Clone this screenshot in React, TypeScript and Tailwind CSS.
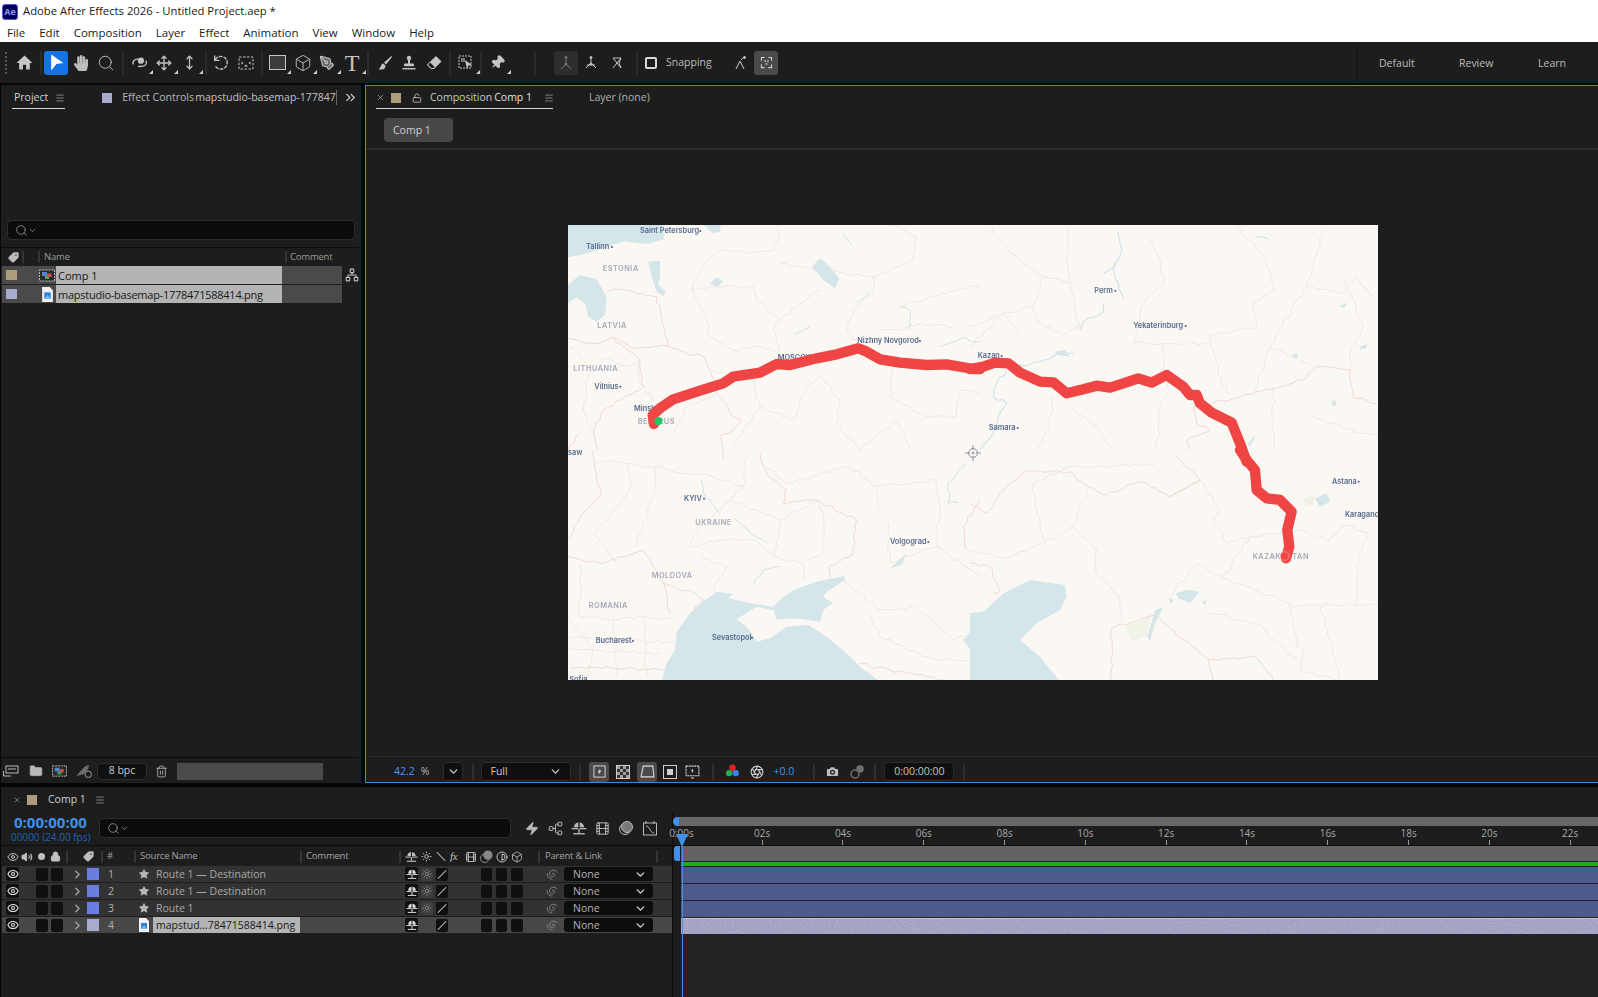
import { Box, Contrast, Film, Search, Sun, ChevronDown, ChevronRight, Camera, Trash2, Folder, Aperture, Star, Zap, Network, Move, MoveVertical, Pin, ChevronsRight, Menu, LockOpen, Lock, Eye, Volume2, Tag, X, PenTool } from "lucide-react";
import { FaHandPaper } from "react-icons/fa";
import type { ReactNode } from "react";

const menus = ["File", "Edit", "Composition", "Layer", "Effect", "Animation", "View", "Window", "Help"];
const seconds = ["0:00s", "02s", "04s", "06s", "08s", "10s", "12s", "14s", "16s", "18s", "20s", "22s", "24s"];
const layers = [
  { n: 1, name: "Route 1 — Destination", color: "bg-[#6a7ee0]", shape: true },
  { n: 2, name: "Route 1 — Destination", color: "bg-[#6a7ee0]", shape: true },
  { n: 3, name: "Route 1", color: "bg-[#6a7ee0]", shape: true },
  { n: 4, name: "mapstud…78471588414.png", color: "bg-[#a9abcd]", shape: false },
];

// small corner tick for tools with flyouts
function Tick() {
  return <span className="absolute right-[-2px] bottom-[1px] w-0 h-0 border-l-[4px] border-l-transparent border-b-[4px] border-b-[#cfcfcf]" />;
}

function Tool({ children, tick, className = "" }: { children: ReactNode; tick?: boolean; className?: string }) {
  return (
    <div className={`relative w-6 h-6 flex items-center justify-center shrink-0 text-[#c4c4c4] ${className}`}>
      {children}
      {tick && <Tick />}
    </div>
  );
}

function Sep({ className = "" }: { className?: string }) {
  return <div className={`w-[2px] h-[24px] bg-[#2b2b2b] shrink-0 ${className}`} />;
}

function ColSep({ className = "" }: { className?: string }) {
  return <div className={`w-[2px] h-[12px] bg-[#353535] shrink-0 ${className}`} />;
}

function Burger({ className = "" }: { className?: string }) {
  return <Menu size={10} strokeWidth={1.4} className={`text-[#c8c8c8] shrink-0 ${className}`} />;
}

function CompIcon({ className = "" }: { className?: string }) {
  return (
    <svg viewBox="0 0 16 12" className={className}>
      <rect x="0.5" y="0.5" width="15" height="11" fill="#2b2b2b" stroke="#b9b9b9" strokeDasharray="2 1" />
      <rect x="3" y="2.5" width="5" height="4" fill="#4f86d9" />
      <rect x="8" y="4" width="4.5" height="3.5" fill="#d34848" />
      <rect x="6" y="6.5" width="4" height="3" fill="#4aa85a" />
    </svg>
  );
}

function PngIcon({ className = "" }: { className?: string }) {
  return (
    <svg viewBox="0 0 10 14" className={className}>
      <path d="M0 0H7L10 3V14H0Z" fill="#f2f2f2" />
      <rect x="2" y="5" width="6" height="6" fill="#2f7fd6" />
      <path d="M2 11L5 7.5L8 11Z" fill="#7cc0f0" />
    </svg>
  );
}

function ShyIcon({ className = "" }: { className?: string }) {
  return (
    <svg viewBox="0 0 14 13" className={className} fill="currentColor">
      <path d="M2.5 5.5A4.5 4.5 0 0 1 11.5 5.5Z" />
      <rect x="0.5" y="6" width="13" height="1.2" />
      <rect x="6.4" y="0.5" width="1.2" height="10" fill="#1d1d1d" />
      <rect x="6.4" y="7" width="1.2" height="3.5" />
      <rect x="2" y="10.5" width="10" height="1.2" />
    </svg>
  );
}

function Spiral() {
  return (
    <svg viewBox="0 0 14 14" className="w-3 h-3 text-[#8d8d8d]" fill="none" stroke="currentColor" strokeWidth="1">
      <path d="M7.5 7.5C6.5 6.5 8.8 5.2 9.8 6.8C11 9 8.2 11 5.8 9.8C3.2 8.2 3.8 3.8 7.2 2.8C9.5 2.2 12 3 13 5" />
      <path d="M1.5 6C1 9.5 3.5 13 7.5 12.8" />
    </svg>
  );
}

function AxisIcon({ spread }: { spread?: boolean }) {
  return (
    <svg viewBox="0 0 16 16" className="w-4 h-4" fill="none" stroke="currentColor" strokeWidth="1">
      <path d={spread ? "M8 2V8M8 8L3 13M8 8L13 13M4 10H12" : "M8 2V9M8 9L3 14M8 9L13 14"} />
      <circle cx="8" cy="2.5" r="1" fill="currentColor" />
      <circle cx="8" cy="9" r="1" fill="currentColor" />
    </svg>
  );
}

// jagged boundary line from a few anchor points, seeded so it stays the same each render
function rough(pts: number[][], seed = 1) {
  let s = seed * 97;
  const rnd = () => {
    s = (s * 16807 + 11) % 2147483647;
    return (s % 1000) / 1000 - 0.5;
  };
  let d = `M${pts[0][0]},${pts[0][1]}`;
  for (let i = 1; i < pts.length; i++) {
    const [ax, ay] = pts[i - 1];
    const [bx, by] = pts[i];
    const steps = Math.max(2, Math.round(Math.hypot(bx - ax, by - ay) / 16));
    for (let k = 1; k <= steps; k++) {
      const t = k / steps;
      const j = k === steps ? 0 : 10;
      d += ` L${(ax + (bx - ax) * t + rnd() * j).toFixed(1)},${(ay + (by - ay) * t + rnd() * j).toFixed(1)}`;
    }
  }
  return d;
}

function poly(pts: number[][]) {
  return "M" + pts.map((p) => p.join(",")).join(" L") + "Z";
}

function Lines({ list, color, width = 2.4 }: { list: number[][][]; color: string; width?: number }) {
  return (
    <>
      {list.map((pts, i) => (
        <path key={i} d={rough(pts, i + pts.length + 3)} fill="none" stroke={color} strokeWidth={width} strokeLinejoin="round" />
      ))}
    </>
  );
}

function Label({ x, y, t, dot, size = 22, big }: { x: number; y: number; t: string; dot?: number[]; size?: number; big?: boolean }) {
  return (
    <>
      <text x={x} y={y} fontSize={big ? 22 : size} fontWeight={600} letterSpacing={big ? 1.6 : 0} fill={big ? "#a3a8ba" : "#566a90"} fontFamily="Inter, sans-serif">
        {t}
      </text>
      {dot && <circle cx={dot[0]} cy={dot[1]} r="3" fill="#4a5d82" />}
    </>
  );
}

const water = "#d4e6ea";
const river = "#cde3e9";
const land = "#fbf8f3";
const grey = "#e8e5de";
const pink = "#edcfce";

const routeA = [[282, 612], [278, 585], [300, 565], [340, 538], [420, 512], [490, 490], [520, 470], [600, 458], [650, 432], [690, 435], [770, 415], [830, 403], [895, 385], [920, 395], [960, 418], [1020, 428], [1100, 435], [1160, 433], [1240, 447], [1260, 447]];
const routeB = [[0, 447], [40, 440], [75, 428], [115, 430], [150, 458], [210, 485], [250, 487], [290, 520], [340, 508], [380, 497], [420, 503], [460, 490], [505, 475], [545, 488], [590, 465], [640, 500], [660, 525], [680, 525], [690, 550], [725, 578], [785, 608], [810, 670], [830, 725]];
const routeD = [[810, 0], [830, 30], [855, 60], [860, 120], [890, 145], [930, 150], [965, 185], [952, 240], [958, 290], [948, 325]];

function MapView() {
  const routeProps = { fill: "none", stroke: "#f04545", strokeWidth: 31, strokeLinejoin: "round" as const, strokeLinecap: "round" as const };
  return (
    <svg viewBox="0 0 810 455" className="w-[810px] h-[455px] block blur-[0.4px]" style={{ background: land }}>
      {/* north west */}
      <g transform="translate(-8 -5) scale(0.3333)">
        <path d={poly([[24, 15], [310, 15], [312, 58], [260, 72], [190, 64], [130, 85], [75, 102], [24, 112]])} fill={water} />
        <path d={poly([[24, 250], [50, 232], [75, 250], [85, 290], [110, 305], [135, 285], [140, 230], [110, 178], [60, 165], [24, 195]])} fill={water} />
        <path d={poly([[265, 125], [300, 122], [300, 170], [295, 195], [318, 215], [310, 228], [290, 215], [275, 170]])} fill={water} />
        <path d={poly([[430, 15], [482, 15], [480, 35], [460, 40]])} fill={water} />
        <path d={poly([[450, 190], [470, 172], [490, 185], [470, 200]])} fill={water} />
        <path d={poly([[755, 140], [780, 115], [800, 130], [838, 175], [825, 205], [790, 180]])} fill={water} />
        <path d={poly([[24, 130], [60, 118], [72, 140], [40, 155], [24, 150]])} fill={land} />
        <Lines color={river} width={3} list={[[[850, 40], [875, 75]], [[1020, 260], [1050, 270], [1045, 330]], [[700, 345], [750, 320]], [[1140, 380], [1200, 355], [1260, 365]], [[890, 250], [930, 215]]]} />
        <Lines color={grey} list={[
          [[480, 90], [570, 100], [640, 90], [660, 40], [650, 15]],
          [[480, 90], [430, 130], [395, 205], [440, 300], [450, 350], [520, 390], [600, 380]],
          [[395, 205], [470, 200], [580, 200], [590, 240], [660, 300], [780, 210]],
          [[660, 130], [760, 150], [940, 170], [940, 220], [880, 270], [860, 330], [900, 375]],
          [[940, 170], [1060, 120], [1070, 50], [1000, 15]],
          [[600, 380], [660, 400], [640, 330], [660, 300]],
          [[1020, 260], [1170, 215], [1260, 200]],
          [[1180, 320], [1080, 310], [1020, 330], [960, 330]],
          [[450, 450], [580, 470], [600, 560], [700, 600], [740, 500], [780, 470]],
          [[780, 470], [840, 540], [830, 610], [900, 690]],
          [[1000, 445], [990, 530], [1100, 590], [1190, 590], [1200, 510], [1260, 520]],
          [[600, 560], [520, 680]],
          [[240, 420], [240, 490], [300, 560]],
          [[340, 640], [380, 560], [470, 520]],
          [[30, 380], [90, 440], [70, 560], [110, 680]],
          [[120, 415], [200, 440], [240, 420]],
          [[900, 690], [1010, 600], [1050, 690]],
        ]} />
        <Lines color={pink} list={[
          [[140, 215], [180, 208], [230, 222], [290, 230], [300, 270], [322, 378], [380, 400], [430, 410], [450, 450], [470, 520], [520, 590], [545, 600], [510, 640], [480, 650], [490, 720]],
          [[24, 355], [100, 370], [160, 352], [230, 385], [322, 378]],
          [[160, 352], [240, 420], [250, 500], [130, 570], [100, 640], [115, 690]],
          [[60, 640], [24, 690]],
        ]} />
        <Label x={240} y={40} t="Saint Petersburg" dot={[421, 33]} />
        <Label x={78} y={88} t="Tallinn" dot={[156, 81]} />
        <Label x={128} y={153} t="ESTONIA" big />
        <Label x={112} y={323} t="LATVIA" big />
        <Label x={40} y={452} t="LITHUANIA" big />
        <Label x={103} y={508} t="Vilnius" dot={[181, 500]} />
        <Label x={222} y={572} t="Minsk" />
        <Label x={233} y={613} t="BELARUS" big />
        <Label x={653} y={419} t="MOSCOW" />
        <Label x={892} y={369} t="Nizhny Novgorod" dot={[1080, 363]} />
        <Label x={24} y={705} t="saw" />
      </g>
      {/* north east */}
      <g transform="translate(402 -5) scale(0.3333)">
        <Lines color={river} width={3.5} list={[
          [[445, 35], [455, 90], [430, 150], [445, 190], [460, 235]],
          [[400, 160], [440, 130]],
          [[400, 250], [400, 275], [340, 305], [330, 330]],
          [[130, 440], [210, 425], [270, 400], [310, 400]],
          [[110, 450], [80, 490], [70, 530], [110, 550], [85, 590], [70, 640], [30, 690]],
          [[860, 50], [895, 58]],
        ]} />
        <path d={poly([[250, 395], [285, 390], [300, 410], [265, 405]])} fill={water} />
        <path d={poly([[835, 670], [855, 645], [850, 665], [835, 680]])} fill={water} />
        <path d={poly([[1085, 545], [1095, 540], [1100, 555], [1088, 558]])} fill={water} />
        <path d={poly([[965, 405], [980, 400], [985, 412], [970, 415]])} fill={water} />
        <path d={poly([[1168, 380], [1192, 372], [1188, 385], [1172, 388]])} fill={water} />
        <path d={poly([[1110, 255], [1130, 250], [1125, 262], [1112, 262]])} fill={water} />
        <Lines color={grey} list={[
          [[65, 20], [120, 100], [220, 170], [300, 190], [330, 320], [280, 345], [200, 300], [190, 260]],
          [[220, 170], [190, 260], [100, 280], [0, 320]],
          [[300, 20], [290, 60], [300, 190]],
          [[540, 60], [570, 120], [580, 190], [520, 250], [490, 370], [580, 370], [720, 370]],
          [[800, 15], [880, 110], [905, 160], [910, 210], [850, 250], [860, 320], [720, 345], [720, 370], [745, 450], [770, 520]],
          [[1060, 30], [1010, 200], [900, 380], [855, 510]],
          [[1010, 200], [1120, 220], [1160, 170], [1210, 230]],
          [[900, 380], [1030, 440]],
          [[580, 370], [580, 440], [600, 510], [570, 560], [560, 690]],
          [[300, 560], [380, 620], [430, 690]],
          [[250, 530], [240, 620], [200, 690]],
          [[910, 500], [910, 690]],
          [[1030, 590], [1170, 640], [1224, 640]],
          [[1120, 170], [1180, 320], [1140, 400], [1150, 450]],
          [[0, 380], [100, 280], [150, 340]],
        ]} />
        <Lines color={pink} list={[
          [[670, 560], [780, 540], [1000, 480], [1040, 440], [1140, 450], [1150, 530], [1220, 550]],
          [[670, 560], [680, 610], [720, 630], [650, 660], [660, 690]],
        ]} />
        <Label x={23} y={413} t="Kazan" dot={[95, 408]} />
        <Label x={373} y={218} t="Perm" dot={[436, 212]} />
        <Label x={490} y={325} t="Yekaterinburg" dot={[647, 318]} />
        <Label x={56} y={630} t="Samara" dot={[143, 624]} />
      </g>
      {/* south west */}
      <g transform="translate(-8 225) scale(0.3333)">
        <path d={poly([[305, 695], [320, 640], [345, 600], [350, 545], [390, 490], [430, 455], [470, 425], [520, 432], [505, 445], [585, 462], [640, 470], [645, 482], [590, 470], [530, 508], [565, 535], [590, 575], [630, 565], [680, 530], [745, 525], [800, 560], [860, 610], [900, 650], [960, 695]])} fill={water} />
        <path d={poly([[640, 470], [660, 450], [700, 420], [770, 395], [852, 378], [855, 390], [800, 425], [790, 440], [818, 460], [790, 480], [780, 515], [730, 508], [690, 505], [650, 510]])} fill={water} />
        <path d={poly([[1262, 510], [1210, 570], [1262, 640]])} fill={water} />
        <path d={poly([[990, 355], [1040, 310], [1025, 345]])} fill={water} />
        <Lines color={river} width={3} list={[[[1215, 40], [1165, 100], [1165, 160], [1195, 158]], [[520, 205], [570, 250], [620, 280]], [[580, 405], [610, 360], [660, 350]], [[425, 90], [430, 130], [480, 190]]]} />
        <Lines color={grey} list={[
          [[100, 50], [130, 35], [290, 50], [370, 70], [430, 70]],
          [[200, 40], [215, 110], [140, 210], [100, 250], [170, 340]],
          [[290, 50], [280, 140], [225, 290]],
          [[430, 70], [550, 110], [560, 20]],
          [[550, 110], [510, 150], [420, 230], [390, 290], [480, 270], [590, 270], [640, 320], [730, 340], [730, 390]],
          [[510, 150], [660, 210], [650, 290], [640, 320]],
          [[660, 210], [770, 150], [790, 185], [790, 310], [740, 330]],
          [[600, 30], [680, 100], [870, 50], [950, 110], [960, 190]],
          [[950, 110], [1050, 100], [1130, 90], [1140, 170], [1130, 290]],
          [[985, 220], [990, 340], [1130, 290], [1260, 380]],
          [[850, 390], [960, 480], [1070, 470], [1180, 570], [1260, 550]],
          [[930, 490], [960, 560], [1100, 620], [1260, 640]],
          [[420, 320], [500, 350], [460, 420]],
          [[60, 340], [60, 500], [160, 510], [250, 500], [340, 510]],
          [[25, 500], [100, 600], [80, 680]],
          [[160, 510], [170, 680]],
          [[250, 500], [260, 680]],
          [[30, 600], [300, 610]],
          [[30, 560], [340, 580]],
        ]} />
        <Lines color={pink} list={[
          [[100, 0], [105, 60], [125, 130], [60, 200], [24, 270]],
          [[24, 320], [120, 340], [250, 300], [310, 400], [330, 490]],
          [[310, 400], [405, 430], [430, 450], [390, 490]],
          [[600, 10], [620, 70], [680, 120], [670, 160], [770, 150], [890, 210], [880, 310], [805, 350], [810, 385]],
          [[900, 640], [990, 660], [1150, 690]],
          [[1260, 150], [1210, 230], [1220, 300]],
          [[30, 650], [310, 660]],
        ]} />
        <Label x={372} y={153} t="KYIV" dot={[432, 146]} size={22} />
        <Label x={406} y={225} t="UKRAINE" big />
        <Label x={275} y={385} t="MOLDOVA" big />
        <Label x={86} y={475} t="ROMANIA" big />
        <Label x={107} y={580} t="Bucharest" dot={[219, 573]} />
        <Label x={456} y={570} t="Sevastopol" dot={[576, 563]} />
        <Label x={990} y={282} t="Volgograd" dot={[1105, 276]} />
        <Label x={28} y={695} t="Sofia" />
      </g>
      {/* south east */}
      <g transform="translate(402 225) scale(0.3333)">
        <path d={poly([[0, 490], [40, 485], [100, 430], [180, 390], [285, 405], [290, 440], [270, 480], [200, 520], [150, 570], [210, 620], [270, 695], [0, 695]])} fill={water} />
        <path d={poly([[618, 430], [650, 420], [690, 425], [660, 460], [625, 445]])} fill={water} />
        <path d={poly([[555, 480], [580, 470], [555, 520], [540, 575], [532, 560]])} fill={water} />
        <path d={poly([[1035, 145], [1070, 130], [1080, 155], [1050, 170]])} fill={water} />
        <path d={poly([[595, 445], [610, 450], [605, 462]])} fill={water} />
        <path d={poly([[695, 455], [710, 450], [705, 465]])} fill={water} />
        <path d={poly([[1000, 145], [1035, 135], [1030, 165], [1010, 168]])} fill="#eef1e4" />
        <path d={poly([[465, 530], [545, 497], [530, 555], [485, 575]])} fill="#f0f3e6" />
        <Lines color={grey} list={[
          [[190, 100], [200, 180], [225, 280], [310, 230], [380, 300], [380, 370], [450, 440], [460, 510]],
          [[355, 110], [310, 230]],
          [[730, 210], [750, 180], [690, 90], [600, 140]],
          [[730, 210], [770, 280], [840, 260], [760, 385], [680, 340], [600, 440]],
          [[760, 385], [960, 460], [980, 590], [1000, 600], [990, 660], [1100, 690]],
          [[840, 260], [1000, 240], [1075, 275], [1130, 225], [1195, 250], [1160, 350], [1160, 465]],
          [[960, 465], [1224, 465]],
          [[1050, 465], [1110, 690]],
          [[190, 100], [300, 50], [420, 50], [560, 40]],
          [[0, 300], [110, 325], [215, 280]],
          [[720, 490], [860, 520], [1000, 650]],
        ]} />
        <Lines color={pink} list={[
          [[0, 160], [50, 190], [90, 130], [170, 60], [300, 65], [355, 110], [410, 135], [510, 95], [600, 140], [690, 90], [620, 20]],
          [[0, 340], [60, 350], [90, 420], [70, 430]],
          [[425, 690], [425, 535], [555, 495], [715, 630], [855, 620], [910, 690]],
          [[715, 630], [730, 690]],
        ]} />
        <Label x={1086} y={101} t="Astana" dot={[1166, 95]} />
        <Label x={1125} y={200} t="Karaganda" />
        <Label x={848} y={327} t="KAZAKHSTAN" big />
      </g>
      {/* route */}
      <g transform="translate(-8 -5) scale(0.3333)">
        <path d={"M" + routeA.map((p) => p.join(",")).join(" L")} {...routeProps} />
      </g>
      <g transform="translate(402 -5) scale(0.3333)">
        <path d={"M" + routeB.map((p) => p.join(",")).join(" L")} {...routeProps} />
      </g>
      <g transform="translate(402 225) scale(0.3333)">
        <path d={"M" + routeD.map((p) => p.join(",")).join(" L")} {...routeProps} />
        <circle cx="944" cy="318" r="13" fill="#f04545" stroke="#f9c7c0" strokeWidth="1.5" />
      </g>
      <circle cx="90.3" cy="196" r="4" fill="#22c55e" />
      {/* layer anchor */}
      <g transform="translate(405 228)" fill="none" stroke="#8f93a8" strokeWidth="1">
        <circle r="4.5" fill="#f7f4ef" />
        <circle r="1" />
        <path d="M0 -8V-3M0 3V8M-8 0H-3M3 0H8" />
      </g>
    </svg>
  );
}

// grainy footage bar
function NoiseBar() {
  return (
    <svg className="w-full h-[16px] block" preserveAspectRatio="none">
      <filter id="grain">
        <feTurbulence type="fractalNoise" baseFrequency="0.9" numOctaves="2" />
        <feColorMatrix values="0 0 0 0 0.95  0 0 0 0 0.95  0 0 0 0 1  0 0 0 0.9 -0.25" />
      </filter>
      <rect width="100%" height="100%" fill="#9c9cc0" />
      <rect width="100%" height="100%" filter="url(#grain)" opacity="0.45" />
      <rect width="100%" height="1" fill="#c4c3dc" />
    </svg>
  );
}

export default function App() {
  return (
    <div className="w-[1598px] h-[997px] bg-[#060606] overflow-hidden flex flex-col text-[10.5px] text-[#b9b9b9]" style={{ fontFamily: '"Open Sans", "Noto Sans", sans-serif' }}>
      {/* title + menu */}
      <div className="h-[42px] bg-white text-[#1a1a1a] shrink-0">
        <div className="h-[23px] flex items-center">
          <div className="ml-[2px] w-[16px] h-[16px] rounded-[3px] bg-[#00005b] border border-[#5a5ad0] flex items-center justify-center text-[9px] font-bold text-[#9999ff] leading-none">Ae</div>
          <span className="ml-[5px] text-[11.3px]">Adobe After Effects 2026 - Untitled Project.aep *</span>
        </div>
        <div className="h-[19px] flex items-center text-[11.5px] pl-[7px] gap-[14px] pt-px">
          {menus.map((m) => <span key={m}>{m}</span>)}
        </div>
      </div>

      {/* toolbar */}
      <div className="h-[41px] bg-[#1d1d1d] shrink-0 flex items-center">
        <div className="ml-[5px] w-[2px] h-[22px] border-l-2 border-dotted border-[#555]" />
        <Tool className="ml-[5px]">
          <svg viewBox="0 0 16 16" className="w-[17px] h-[17px]" fill="#c8c8c8"><path d="M8 1.5L0.5 8.5H3V14.5H6.5V10H9.5V14.5H13V8.5H15.5Z" /></svg>
        </Tool>
        <Sep className="ml-[4px]" />
        <div className="ml-[2px] w-6 h-6 rounded-[3px] bg-[#1473e6] flex items-center justify-center shrink-0">
          <svg viewBox="0 0 16 16" className="w-[17px] h-[17px]" fill="#fff"><path d="M3 0.5L14.5 8.5L8 9.5L3 15.5Z" /></svg>
        </div>
        <Tool className="ml-[1px]"><FaHandPaper size={16} className="text-[#bdbdbd]" /></Tool>
        <Tool className="ml-[1px]"><Search size={18} strokeWidth={1.2} /></Tool>
        <Sep className="ml-[4px]" />
        <Tool tick className="ml-[3px] text-[#5f5f5f]">
          <svg viewBox="0 0 16 16" className="w-[15px] h-[15px]" fill="none" stroke="currentColor" strokeWidth="1.4"><path d="M1.5 10A5 4 0 0 1 7 4.5M14.5 6A5 4 0 0 1 9 12L6.5 12.5" /><circle cx="9.5" cy="6" r="2.6" fill="currentColor" /></svg>
        </Tool>
        <Tool tick className="ml-[1px] text-[#5f5f5f]"><Move size={16} strokeWidth={2} /></Tool>
        <Tool tick className="ml-[1px] text-[#5f5f5f]"><MoveVertical size={15} strokeWidth={2} /></Tool>
        <Sep className="ml-[4px]" />
        <Tool className="ml-[1px]">
          <svg viewBox="0 0 16 16" className="w-[17px] h-[17px]" fill="none" stroke="currentColor" strokeWidth="1.3"><path d="M2.5 1.5V6H7" /><path d="M3 5.5A6 6 0 1 1 3 11" strokeDasharray="3.5 1" /></svg>
        </Tool>
        <Tool className="ml-[2px]">
          <svg viewBox="0 0 16 16" className="w-4 h-4" fill="currentColor"><rect x="1" y="2" width="14" height="12" fill="none" stroke="currentColor" strokeDasharray="2.5 1.5" /><path d="M3.5 6.5L5.5 8L3.5 9.5ZM12.5 6.5L10.5 8L12.5 9.5ZM6 11.5L8 9.5L10 11.5Z" /></svg>
        </Tool>
        <Sep className="ml-[3px]" />
        <Tool tick className="ml-[2px]">
          <div className="w-[17px] h-[15px] bg-[#3b3b3b] border border-[#c4c4c4]" />
        </Tool>
        <Tool tick className="ml-[2px]"><Box size={18} strokeWidth={1.2} /></Tool>
        <Tool tick><PenTool size={16} strokeWidth={1.6} fill="#6a6a6a" /></Tool>
        <Tool tick className="ml-[1px]"><span className="text-[24px] leading-none" style={{ fontFamily: '"Liberation Serif", serif' }}>T</span></Tool>
        <Sep className="ml-[3px]" />
        <Tool className="ml-[4px]">
          <svg viewBox="0 0 16 16" className="w-4 h-4" fill="currentColor"><path d="M14.5 1L7 7.5L9 9.5L15 2Z" /><path d="M6.2 8.5C3.5 9 4.8 12.2 1.5 14C5 15.5 9.3 14 8.2 10.3Z" /></svg>
        </Tool>
        <Tool>
          <svg viewBox="0 0 16 16" className="w-4 h-4" fill="currentColor"><circle cx="8" cy="3" r="2.2" /><rect x="7" y="4.5" width="2" height="5" /><rect x="3" y="8.5" width="10" height="2.8" rx="0.8" /><rect x="1.5" y="13" width="13" height="1.4" /></svg>
        </Tool>
        <Tool className="ml-[1px]">
          <svg viewBox="0 0 16 16" className="w-4 h-4" fill="currentColor"><path d="M10 1L15.5 6.5L8 14H5L0.8 9.8Z" /><path d="M4.2 7.6L8.6 12L7.4 13H5.4L2.2 9.8Z" fill="#1d1d1d" /></svg>
        </Tool>
        <Sep className="ml-[3px]" />
        <Tool tick className="ml-[3px]">
          <svg viewBox="0 0 16 16" className="w-4 h-4" fill="none" stroke="currentColor"><rect x="1" y="1" width="12" height="12" strokeDasharray="2 1" /><path d="M7 5L14 10L10.5 10.5L9 14Z" fill="currentColor" stroke="none" /><rect x="3" y="3" width="4" height="4" fill="#777" stroke="none" /></svg>
        </Tool>
        <Sep className="ml-[2px]" />
        <Tool tick className="ml-[3px]"><Pin size={15} fill="currentColor" className="rotate-45" /></Tool>
        <Sep className="ml-[25px]" />
        <div className="ml-[18px] w-6 h-6 rounded-[3px] bg-[#2e2e2e] flex items-center justify-center text-[#777] shrink-0"><AxisIcon /></div>
        <Tool className="ml-[1px] text-[#666]"><AxisIcon spread /></Tool>
        <Tool className="ml-[2px] text-[#555]">
          <svg viewBox="0 0 16 16" className="w-4 h-4" fill="none" stroke="currentColor"><path d="M4 3L12 13M12 3L4 13M4 3H12L10 8L12 13" /></svg>
        </Tool>
        <Sep className="ml-[7px]" />
        <div className="ml-[7px] w-[12px] h-[12px] rounded-[2px] border-2 border-[#d8d8d8] shrink-0" />
        <span className="ml-[9px] w-[47px] whitespace-nowrap text-[#bcbcbc]">Snapping</span>
        <Tool className="ml-[15px] text-[#cfcfcf]">
          <svg viewBox="0 0 16 16" className="w-4 h-4" fill="none" stroke="currentColor"><path d="M4 14L8 6L12 14M9 5L12 2" /><circle cx="12.5" cy="2.5" r="1" fill="currentColor" /></svg>
        </Tool>
        <div className="ml-[2px] w-6 h-6 rounded-[3px] bg-[#4a4a4a] flex items-center justify-center shrink-0 text-[#d0d0d0]">
          <svg viewBox="0 0 16 16" className="w-[15px] h-[15px]" fill="currentColor"><path d="M2 2H6V3.2H3.2V6H2ZM10 2H14V6H12.8V3.2H10ZM2 10H3.2V12.8H6V14H2ZM12.8 10H14V14H10V12.8H12.8Z" /><circle cx="6.5" cy="6.5" r="1" /><circle cx="9.5" cy="6.5" r="1" /><circle cx="8" cy="9.5" r="1" /></svg>
        </div>
        <div className="ml-[579px] w-px h-[36px] bg-[#111]" />
        <span className="ml-[21px] w-[80px] mt-[2px] text-[#bcbcbc]">Default</span>
        <span className="w-[79px] mt-[2px] text-[#bcbcbc]">Review</span>
        <span className="mt-[2px] text-[#bcbcbc]">Learn</span>
      </div>

      {/* project + comp */}
      <div className="mt-[2px] h-[698px] shrink-0 flex">
        {/* project panel */}
        <div className="ml-px w-[360px] bg-[#1d1d1d] flex flex-col">
          <div className="h-[24px] flex items-center relative shrink-0 pt-px">
            <span className="ml-[13px] text-[#d2d2d2]">Project</span>
            <Burger className="ml-[7px]" />
            <div className="absolute left-[11px] bottom-0 w-[53px] h-px bg-[#d8d8d8]" />
            <div className="ml-[37px] w-[10px] h-[10px] bg-[#a9abcd] shrink-0" />
            <span className="ml-[10px] w-[71px] whitespace-nowrap">Effect Controls</span>
            <span className="ml-[2px] w-[142px] overflow-hidden whitespace-nowrap border-r border-[#666] text-[#c4c4c4]">mapstudio-basemap-1778471588414.png</span>
            <ChevronsRight size={15} strokeWidth={2} className="ml-[6px] text-[#c8c8c8]" />
          </div>
          <div className="mt-[111px] mx-[6px] h-[20px] rounded-[4px] bg-[#0c0c0c] border border-[#2c2c2c] flex items-center pl-[7px] shrink-0">
            <Search size={13} strokeWidth={1.3} className="text-[#a8a8a8]" />
            <ChevronDown size={9} strokeWidth={1.8} className="text-[#a8a8a8]" />
          </div>
          <div className="mt-[7px] h-px bg-[#0c0c0c] mr-[2px]" />
          <div className="h-[18px] flex items-center shrink-0 text-[9.5px] tracking-[-0.2px] text-[#9b9b9b]">
            <Tag size={13} fill="#bdbdbd" strokeWidth={1} className="ml-[6px] text-[#1d1d1d] rotate-90" />
            <ColSep className="ml-[2px]" />
            <ColSep className="ml-[14px]" />
            <span className="ml-[4px] w-[241px]">Name</span>
            <ColSep />
            <span className="ml-[3px]">Comment</span>
          </div>
          {[
            { name: "Comp 1", color: "bg-[#ae9d7b]", icon: <CompIcon className="w-[16px] h-[13px]" /> },
            { name: "mapstudio-basemap-1778471588414.png", color: "bg-[#a9abcd]", icon: <PngIcon className="w-[11px] h-[15px] mx-[2px]" /> },
          ].map((r, i) => (
            <div key={r.name} className="h-[18px] mb-px flex items-center shrink-0">
              <div className="ml-px w-[340px] h-full bg-[#4a4a4a] flex items-center">
                <div className={`ml-[4px] w-[11px] h-[10px] ${r.color} shrink-0`} />
                <div className="ml-[22px] w-[16px] flex justify-center shrink-0">{r.icon}</div>
                <div className="w-[226px] h-full bg-[#b4b4b4] text-[#181818] text-[11px] flex items-center pl-[2px] pt-[2px] whitespace-nowrap ml-px">
                  <span className={i === 1 ? "tracking-[-0.25px]" : ""}>{r.name}</span>
                </div>
              </div>
              {i === 0 && <Network size={14} strokeWidth={2} className="ml-[3px] text-[#c0c0c0]" />}
            </div>
          ))}
          <div className="flex-1" />
          <div className="h-px bg-[#0c0c0c] mr-[2px]" />
          <div className="h-[25px] flex items-center shrink-0 text-[#b8b8b8] pt-px">
            <svg viewBox="0 0 16 12" className="ml-[2px] w-4 h-3" fill="none" stroke="currentColor"><rect x="3" y="1" width="12" height="7" /><path d="M5 4H13M0.5 6V11H8" /></svg>
            <Folder size={14} fill="currentColor" strokeWidth={1} className="ml-[10px]" />
            <div className="ml-[9px]"><CompIcon className="w-[15px] h-[12px]" /></div>
            <svg viewBox="0 0 18 14" className="ml-[9px] w-[17px] h-[13px] text-[#6c6c6c]" fill="currentColor"><path d="M0 12L6 5L10 1L14 0L13 4L8 10Z" /><circle cx="13" cy="10" r="3.5" fill="none" stroke="#a0a0a0" /></svg>
            <div className="ml-[4px] w-[50px] h-[17px] rounded-[4px] bg-[#101010] border border-[#2c2c2c] flex items-center justify-center text-[#c8c8c8]">8 bpc</div>
            <Trash2 size={13} strokeWidth={1.5} className="ml-[8px]" />
            <div className="ml-[9px] w-[146px] h-[17px] bg-[#4b4b4b]" />
          </div>
        </div>

        {/* composition panel */}
        <div className="ml-[4px] flex-1 bg-[#1d1d1d] border-t border-l border-b border-[#3f8ad8] flex flex-col">
          <div className="h-[23px] flex items-center relative shrink-0">
            <X size={9} strokeWidth={1.6} className="ml-[10px] text-[#c0c0c0]" />
            <div className="ml-[6px] w-[10px] h-[10px] bg-[#ae9d7b] shrink-0" />
            <LockOpen size={10} strokeWidth={2} className="ml-[11px] text-[#c0c0c0]" />
            <span className="ml-[8px] text-[#c8c8c8] whitespace-nowrap">Composition</span>
            <span className="ml-[2px] text-[#e0e0e0] whitespace-nowrap">Comp 1</span>
            <Burger className="ml-[12px]" />
            <div className="absolute left-[10px] bottom-0 w-[177px] h-px bg-[#d8d8d8]" />
            <span className="ml-[35px] whitespace-nowrap text-[#b0b0b0]">Layer (none)</span>
          </div>
          <div className="mt-[9px] ml-[18px] w-[69px] h-[24px] rounded-[4px] bg-[#474747] flex items-center pl-[9px] pt-px text-[#cfcfcf] shrink-0">Comp 1</div>
          <div className="mt-[6px] h-[2px] bg-[#2c2c2c] shrink-0" />
          <div className="flex-1 min-h-0 pt-[75px] pl-[202px]">
            <MapView />
          </div>
          <div className="h-px bg-[#2a2a2a]" />
          <div className="h-[25px] flex items-center shrink-0 pt-[4px]">
            <span className="ml-[28px] text-[#4a97ee]">42.2</span>
            <span className="ml-[6px] text-[#b8b8b8]">%</span>
            <div className="ml-[14px] w-[20px] h-[19px] rounded-[3px] bg-[#0f0f0f] border border-[#2c2c2c] flex items-center justify-center"><ChevronDown size={13} strokeWidth={2.4} className="text-[#d0d0d0]" /></div>
            <div className="ml-[9px] w-[2px] h-[16px] bg-[#2f2f2f]" />
            <div className="ml-[7px] w-[90px] h-[19px] rounded-[3px] bg-[#0f0f0f] border border-[#2c2c2c] flex items-center justify-between px-[8px] text-[#c8c8c8]">Full<ChevronDown size={13} strokeWidth={2.4} /></div>
            <div className="ml-[8px] w-[2px] h-[16px] bg-[#2f2f2f]" />
            <div className="ml-[8px] w-[20px] h-[20px] rounded-[3px] bg-[#4a4a4a] flex items-center justify-center text-[#dcdcdc]">
              <svg viewBox="0 0 14 14" className="w-[13px] h-[13px]" fill="none" stroke="currentColor"><rect x="1" y="1" width="12" height="12" /><path d="M8 3L5 8H7L6 11L9 6H7Z" fill="currentColor" stroke="none" /></svg>
            </div>
            <svg viewBox="0 0 14 14" className="ml-[7px] w-[14px] h-[14px] text-[#cfcfcf]"><rect x="0.5" y="0.5" width="13" height="13" fill="#333" stroke="currentColor" /><path d="M1 1H4V4H1ZM7 1H10V4H7ZM4 4H7V7H4ZM10 4H13V7H10ZM1 7H4V10H1ZM7 7H10V10H7ZM4 10H7V13H4ZM10 10H13V13H10Z" fill="#a0a0a0" /></svg>
            <div className="ml-[7px] w-[20px] h-[20px] rounded-[3px] bg-[#4a4a4a] flex items-center justify-center text-[#dcdcdc]">
              <svg viewBox="0 0 14 14" className="w-[15px] h-[15px]" fill="none" stroke="currentColor"><path d="M3 2H12L13 12H1Z" /></svg>
            </div>
            <div className="ml-[6px] w-[14px] h-[14px] border border-[#cfcfcf] flex items-center justify-center"><div className="w-[6px] h-[6px] bg-[#cfcfcf]" /></div>
            <svg viewBox="0 0 14 14" className="ml-[8px] w-[15px] h-[15px] text-[#cfcfcf]" fill="none" stroke="currentColor"><path d="M1 2H13V11H1ZM7 5V8M5.5 6.5H8.5" strokeDasharray="2 0.5" /><path d="M5 12.5H9L7 14Z" fill="currentColor" stroke="none" /></svg>
            <div className="ml-[12px] w-[2px] h-[16px] bg-[#2f2f2f]" />
            <svg viewBox="0 0 14 14" className="ml-[11px] w-[15px] h-[15px]"><circle cx="7" cy="3.5" r="3" fill="#e02020" /><circle cx="3.8" cy="8.5" r="3" fill="#22b14c" /><circle cx="10" cy="8.5" r="3" fill="#3f7fe8" /></svg>
            <Aperture size={14} strokeWidth={2} className="ml-[10px] text-[#c8c8c8]" />
            <span className="ml-[9px] w-[21px] text-[#4a97ee]">+0.0</span>
            <div className="ml-[19px] w-[2px] h-[16px] bg-[#2f2f2f]" />
            <Camera size={15} fill="#bcbcbc" className="ml-[10px] text-[#1d1d1d]" />
            <svg viewBox="0 0 16 14" className="ml-[9px] w-[16px] h-[14px] text-[#6f6f6f]" fill="none" stroke="currentColor" strokeWidth="1.5"><circle cx="6" cy="9" r="4" /><circle cx="11" cy="4" r="3" fill="currentColor" /></svg>
            <div className="ml-[9px] w-[2px] h-[16px] bg-[#2f2f2f]" />
            <div className="ml-[8px] w-[70px] h-[19px] rounded-[3px] bg-[#0f0f0f] border border-[#2c2c2c] flex items-center justify-center text-[#c4c4c4]">0:00:00:00</div>
            <div className="ml-[9px] w-[2px] h-[16px] bg-[#2f2f2f]" />
          </div>
        </div>
      </div>

      {/* timeline */}
      <div className="mt-[4px] flex-1 min-h-0 ml-px bg-[#1d1d1d] flex flex-col relative">
        <div className="h-[26px] flex items-center shrink-0">
          <X size={8} strokeWidth={1.6} className="ml-[12px] text-[#c0c0c0]" />
          <div className="ml-[6px] w-[10px] h-[10px] bg-[#ae9d7b] shrink-0" />
          <span className="ml-[11px] w-[39px] text-[#d0d0d0] whitespace-nowrap">Comp 1</span>
          <Burger className="ml-[8px]" />
        </div>
        <div className="flex-1 min-h-0 flex">
          {/* layer outline */}
          <div className="w-[672px] shrink-0 flex flex-col border-r border-[#0c0c0c]">
            <div className="h-[33px] flex items-start shrink-0 border-b border-[#0c0c0c]">
              <div className="ml-[10px] w-[80px] shrink-0">
                <div className="text-[15px] leading-[18px] font-bold text-[#3f90ea] whitespace-nowrap pl-[3px]">0:00:00:00</div>
                <div className="text-[10px] leading-[13px] text-[#1f62b4] whitespace-nowrap">00000 (24.00 fps)</div>
              </div>
              <div className="ml-[8px] mt-[5px] w-[412px] h-[20px] rounded-[4px] bg-[#0c0c0c] border border-[#2c2c2c] flex items-center pl-[7px]">
                <Search size={13} strokeWidth={1.3} className="text-[#a8a8a8]" />
                <ChevronDown size={9} strokeWidth={1.8} className="text-[#a8a8a8]" />
              </div>
              <div className="ml-[13px] mt-[7px] flex items-center gap-[8px] text-[#b8b8b8]">
                <Zap size={15} strokeWidth={1} fill="currentColor" className="w-4" />
                <Network size={15} strokeWidth={1.6} className="-rotate-90" />
                <ShyIcon className="w-[16px] h-[15px]" />
                <Film size={15} strokeWidth={1.6} />
                <svg viewBox="0 0 16 16" className="w-4 h-4" fill="none" stroke="currentColor"><circle cx="7" cy="9" r="5.5" /><circle cx="9" cy="7" r="5.5" fill="#7a7a7a" /></svg>
                <svg viewBox="0 0 16 16" className="w-4 h-4" fill="none" stroke="currentColor"><rect x="1.5" y="3" width="13" height="12" /><path d="M4 1V4M12 1V4M4 6C8 6 8 13 12 13" /></svg>
              </div>
            </div>
            <div className="h-[19px] flex items-center shrink-0 text-[9.5px] tracking-[-0.2px] text-[#9b9b9b] pt-[2px]">
              <Eye size={12} strokeWidth={2} className="ml-[6px] text-[#bcbcbc]" />
              <Volume2 size={12} fill="currentColor" className="ml-[2px] text-[#bcbcbc]" />
              <div className="ml-[5px] w-[7px] h-[7px] rounded-full bg-[#c0c0c0]" />
              <Lock size={11} fill="currentColor" className="ml-[5px] text-[#c0c0c0]" />
              <ColSep className="ml-[5px]" />
              <Tag size={13} fill="#bdbdbd" strokeWidth={1} className="ml-[14px] text-[#1d1d1d] rotate-90" />
              <ColSep className="ml-[6px]" />
              <span className="ml-[4px] w-[27px]">#</span>
              <ColSep />
              <span className="ml-[4px] w-[160px] whitespace-nowrap text-[#a2a2a2]">Source Name</span>
              <ColSep />
              <span className="ml-[4px] w-[93px] text-[#a2a2a2]">Comment</span>
              <ColSep />
              <div className="ml-[4px] flex items-center gap-[3px] text-[#c0c0c0]">
                <ShyIcon className="w-[13px] h-[12px]" />
                <Sun size={11} strokeWidth={2} />
                <span className="w-[12px] h-px bg-[#c0c0c0] rotate-45" />
                <span className="w-[12px] text-[11px] italic leading-none" style={{ fontFamily: '"Liberation Serif", serif' }}>fx</span>
                <Film size={12} strokeWidth={1.8} />
                <svg viewBox="0 0 14 14" className="w-[13px] h-[13px]"><circle cx="5" cy="9" r="4.5" fill="none" stroke="#999" /><circle cx="8.5" cy="5.5" r="5" fill="#888" /></svg>
                <Contrast size={12} strokeWidth={2} />
                <Box size={12} strokeWidth={1.6} />
              </div>
              <ColSep className="ml-[15px]" />
              <span className="ml-[5px] w-[111px] whitespace-nowrap text-[#a2a2a2]">Parent &amp; Link</span>
              <ColSep />
            </div>
            <div className="flex flex-col gap-px pt-px">
              {layers.map((l) => (
                <div key={l.n} className={`h-[16px] flex items-center ml-px ${l.shape ? "bg-[#323232]" : "bg-[#474747]"}`}>
                  <div className="ml-[4px] w-[13px] h-[14px] rounded-[2px] bg-[#101010] flex items-center justify-center shrink-0"><Eye size={12} strokeWidth={2.2} className="text-[#e0e0e0]" /></div>
                  <div className="ml-[17px] w-[12px] h-[13px] rounded-[2px] bg-[#101010] shrink-0" />
                  <div className="ml-[3px] w-[12px] h-[13px] rounded-[2px] bg-[#101010] shrink-0" />
                  <ChevronRight size={13} strokeWidth={2.4} className="ml-[8px] text-[#a8a8a8] shrink-0" />
                  <div className={`ml-[3px] w-[12px] h-[12px] shrink-0 ${l.color}`} />
                  <span className="ml-[6px] w-[12px] text-center text-[#b0b0b0] shrink-0 pt-px">{l.n}</span>
                  <div className="ml-[21px] w-[12px] flex justify-center shrink-0">
                    {l.shape ? <Star size={12} fill="#b4b4b4" strokeWidth={0} /> : <PngIcon className="w-[10px] h-[14px]" />}
                  </div>
                  <div className={`ml-[3px] w-[147px] h-full pl-[3px] pt-px flex items-center whitespace-nowrap shrink-0 ${l.shape ? "text-[#a8a8a8]" : "bg-[#b4b4b4] text-[#181818]"}`}>{l.name}</div>
                  <div className="ml-[105px] w-[13px] h-[14px] rounded-[2px] bg-[#101010] flex items-center justify-center text-[#dcdcdc] shrink-0"><ShyIcon className="w-[12px] h-[11px]" /></div>
                  <div className={`ml-[3px] w-[12px] h-[13px] rounded-[2px] flex items-center justify-center shrink-0 ${l.shape ? "bg-[#3e3e3e] text-[#8d8d8d]" : ""}`}>{l.shape && <Sun size={10} strokeWidth={2} />}</div>
                  <div className="ml-[3px] w-[12px] h-[13px] rounded-[2px] bg-[#101010] flex items-center justify-center shrink-0"><span className="w-[12px] h-px bg-[#d0d0d0] -rotate-45" /></div>
                  <div className="ml-[33px] w-[11px] h-[13px] rounded-[2px] bg-[#101010] shrink-0" />
                  <div className="ml-[4px] w-[11px] h-[13px] rounded-[2px] bg-[#101010] shrink-0" />
                  <div className="ml-[4px] w-[12px] h-[13px] rounded-[2px] bg-[#101010] shrink-0" />
                  <div className="ml-[23px] w-[12px] shrink-0"><Spiral /></div>
                  <div className="ml-[6px] w-[89px] h-[14px] rounded-[3px] bg-[#0d0d0d] flex items-center justify-between pl-[9px] pr-[6px] text-[#b4b4b4] shrink-0"><span className="pt-px">None</span><ChevronDown size={13} strokeWidth={2.6} className="text-[#d0d0d0]" /></div>
                </div>
              ))}
            </div>
          </div>

          {/* time graph */}
          <div className="flex-1 min-w-0 flex flex-col">
            <div className="pt-[4px] h-[13px] shrink-0 flex">
              <div className="w-[6px] h-[9px] rounded-l-full bg-[#3f90ea] shrink-0" />
              <div className="flex-1 h-[9px] bg-[#676767]" />
            </div>
            <div className="h-[20px] shrink-0 flex ml-[-32px] border-b border-[#0c0c0c] text-[10px] text-[#a8a8a8]">
              {seconds.map((s) => (
                <div key={s} className="w-[80.8px] shrink-0 flex flex-col items-center justify-end">
                  <span className="leading-[13px]">{s}</span>
                  <div className="w-px h-[5px] bg-[#9a9a9a]" />
                </div>
              ))}
            </div>
            <div className="flex-1 min-h-0 flex">
              <div className="w-[8px] shrink-0">
                <div className="w-[6px] h-[15px] rounded-l-[3px] bg-[#3f90ea] ml-px" />
              </div>
              <div className="flex-1 min-w-0 bg-[#232323] flex flex-col">
                <div className="h-[15px] bg-[#636363] shrink-0" />
                <div className="h-[4px] mt-px bg-[#12b520] shrink-0" />
                <div className="flex flex-col gap-px mt-px">
                  <div className="h-[16px] bg-[#4c5a8c]" />
                  <div className="h-[16px] bg-[#4c5a8c]" />
                  <div className="h-[16px] bg-[#4c5a8c]" />
                  <NoiseBar />
                </div>
              </div>
            </div>
          </div>
        </div>

        {/* playhead */}
        <div className="absolute left-[680.5px] top-[57px] bottom-0 w-px bg-[#4a90e2]" />
        <div className="absolute left-[675px] top-[47px] w-0 h-0 border-l-[6px] border-r-[6px] border-t-[13px] border-l-transparent border-r-transparent border-t-[#3f90ea]" />
      </div>
    </div>
  );
}
